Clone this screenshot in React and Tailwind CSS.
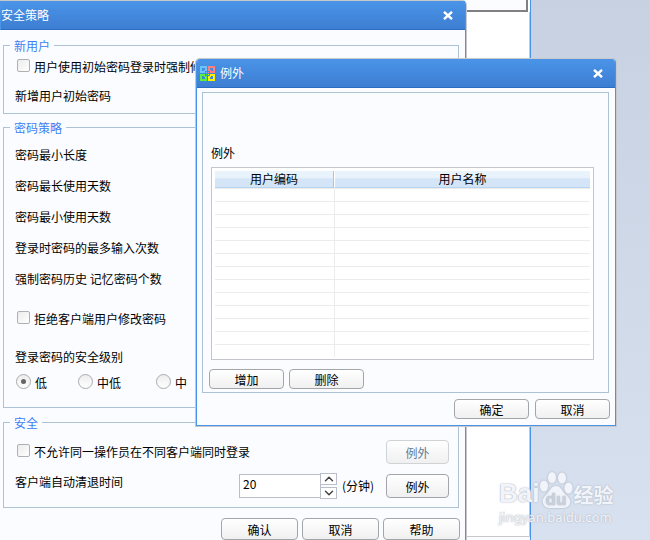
import { useState } from "react";
import { ChevronDown, ChevronUp } from "lucide-react";

const policyRows = [
  "密码最小长度",
  "密码最长使用天数",
  "密码最小使用天数",
  "登录时密码的最多输入次数",
  "强制密码历史 记忆密码个数",
];

const emptyRows = Array.from({ length: 13 }, (_, i) => i);

function TitleBar({ title, icon }) {
  return (
    <header className="flex h-[29px] items-center border-b border-[#2b6cc4] bg-linear-to-b from-[#4a94e8] to-[#3d7ed2] pr-[9px] text-white">
      {icon}
      <h2 className="grow">{title}</h2>
      <button type="button" aria-label="关闭" className="flex h-4 w-4 items-center justify-center">
        <svg width="10" height="9" viewBox="0 0 10 9" fill="none" stroke="white" strokeWidth="2.4">
          <path d="M1 0.8 9 8.2M9 0.8 1 8.2" />
        </svg>
      </button>
    </header>
  );
}

function AppIcon() {
  return (
    <svg
      className="mr-[5px] ml-[3px] shrink-0"
      width="15"
      height="15"
      viewBox="0 0 15 15"
      fill="none"
      strokeWidth="2"
      shapeRendering="crispEdges"
    >
      <path stroke="#6cc4fb" d="M5 6H1V1h5v4" />
      <path stroke="#ff7f7f" d="M10 6h4V1H9v4" />
      <path stroke="#5cf03c" d="M5 9H1v5h5v-4" />
      <path stroke="#fff200" d="M10 9h4v5H9v-4" />
      <path fill="#6cc4fb" d="M4 4h1v1H4zM6 6h1v1H6z" />
      <path fill="#ff7f7f" d="M10 4h1v1h-1zM8 6h1v1H8z" />
      <path fill="#5cf03c" d="M4 10h1v1H4zM6 8h1v1H6z" />
      <path fill="#fff200" d="M10 10h1v1h-1zM8 8h1v1H8z" />
    </svg>
  );
}

function PushButton({ children, className = "", disabled = false }) {
  return (
    <button
      type="button"
      disabled={disabled}
      className={`rounded border border-[#a3a5a8] bg-linear-to-b from-white to-[#f0f0f1] pt-0.5 leading-4 text-black disabled:border-[#d0d3d6] disabled:text-[#5f7d99] ${className}`}
    >
      {children}
    </button>
  );
}

function CheckRow({ children }) {
  return (
    <label className="ml-0.5 flex h-4 gap-1 leading-4">
      <input
        type="checkbox"
        className="h-[13px] w-[13px] shrink-0 appearance-none rounded-xs border border-[#b0b0b0] bg-linear-to-br from-[#ececec] to-white checked:bg-[#4a94e8]"
      />
      <span className="whitespace-nowrap">{children}</span>
    </label>
  );
}

function RadioOption({ children, defaultChecked }) {
  return (
    <label className="flex h-4 gap-1">
      <input
        type="radio"
        name="level"
        defaultChecked={defaultChecked}
        className="grid h-[15px] w-[15px] shrink-0 appearance-none place-items-center rounded-full border border-[#ababab] bg-linear-to-b from-[#ededed] to-white checked:after:h-[5px] checked:after:w-[5px] checked:after:rounded-full checked:after:bg-[#666]"
      />
      <span className="pt-px leading-4">{children}</span>
    </label>
  );
}

function Group({ title, children, className = "" }) {
  return (
    <fieldset className={`border border-[#aec2d6] px-[11px] ${className}`}>
      <legend className="-ml-[5px] px-1 leading-[15px] text-[#3d80f5]">{title}</legend>
      {children}
    </fieldset>
  );
}

function SettingsWindow() {
  const [minutes, setMinutes] = useState(20);

  return (
    <section className="absolute top-px left-0 w-[466px] rounded-tr-sm border-r border-[#4a94e8] bg-[#fbfcff] shadow-[0_0_0_1px_#c6c8cc]">
      <div className="rounded-tr-sm bg-[#4a94e8] pl-px">
        <TitleBar title="安全策略" />
      </div>
      <div className="flex flex-col gap-1.5 pt-2 pr-1.5 pb-4 pl-[3px]">
        <Group title="新用户" className="pb-[9px]">
          <div className="flex flex-col gap-[13px] pt-1.5">
            <CheckRow>用户使用初始密码登录时强制修</CheckRow>
            <p className="leading-4">新增用户初始密码</p>
          </div>
        </Group>

        <Group title="密码策略" className="pb-[17px]">
          <div className="flex flex-col gap-[15px] pt-3 leading-4">
            {policyRows.map((row) => (
              <p key={row}>{row}</p>
            ))}
          </div>
          <div className="pt-6">
            <CheckRow>拒绝客户端用户修改密码</CheckRow>
          </div>
          <p className="pt-[22px] leading-4">登录密码的安全级别</p>
          <div className="ml-px grid grid-cols-[62px_78px_auto] pt-[9px]">
            <RadioOption defaultChecked>低</RadioOption>
            <RadioOption>中低</RadioOption>
            <RadioOption>中</RadioOption>
          </div>
        </Group>

        <Group title="安全" className="mt-px pb-[9px]">
          <div className="flex flex-col gap-2.5 pt-2.5">
            <div className="flex items-center justify-between">
              <CheckRow>不允许同一操作员在不同客户端同时登录</CheckRow>
              <PushButton disabled className="-mr-0.5 h-6 w-[63px]">
                例外
              </PushButton>
            </div>
            <div className="-mr-0.5 flex h-6 items-center">
              <label htmlFor="minutes" className="grow self-start leading-4">
                客户端自动清退时间
              </label>
              <input
                id="minutes"
                inputMode="numeric"
                value={minutes}
                onChange={(e) => setMinutes(Number(e.target.value) || 0)}
                className="h-6 w-[82px] border border-[#b9bec8] bg-white px-[3px] pb-1.5 outline-none"
              />
              <div className="-ml-px flex w-[17px] flex-col gap-0.5">
                <button
                  type="button"
                  aria-label="增加分钟"
                  onClick={() => setMinutes(minutes + 1)}
                  className="flex h-3 items-center justify-center border border-[#b9bec8] bg-white"
                >
                  <ChevronUp className="h-3.5 w-3.5 shrink-0 text-[#444]" strokeWidth={2.5} />
                </button>
                <button
                  type="button"
                  aria-label="减少分钟"
                  onClick={() => setMinutes(Math.max(0, minutes - 1))}
                  className="flex h-3 items-center justify-center border border-[#b9bec8] bg-white"
                >
                  <ChevronDown className="h-3.5 w-3.5 shrink-0 text-[#444]" strokeWidth={2.5} />
                </button>
              </div>
              <span className="w-[49px] pl-[5px]">(分钟)</span>
              <PushButton className="h-6 w-[63px]">例外</PushButton>
            </div>
          </div>
        </Group>

        <div className="-mr-px flex justify-end gap-1 pt-1">
          <PushButton className="h-[22px] w-[77px]">确认</PushButton>
          <PushButton className="h-[22px] w-[77px]">取消</PushButton>
          <PushButton className="h-[22px] w-[77px]">帮助</PushButton>
        </div>
      </div>
    </section>
  );
}

function ExceptionDialog() {
  return (
    <section
      role="dialog"
      aria-label="例外"
      className="absolute top-[59px] left-[196px] w-[420px] overflow-hidden rounded-t-sm border-x border-b border-[#4a94e8] bg-[#fbfcff] shadow-[0_0_0_1px_#c6c8cc]"
    >
      <TitleBar title="例外" icon={<AppIcon />} />
      <div className="px-[5px] pt-1 pb-1.5">
        <div className="mr-px border border-[#aec2d6] px-1.5 pt-[52px] pb-[3px]">
          <p className="pl-0.5 leading-4">例外</p>
          <div className="mt-1.5 mr-2 ml-0.5 border border-[#c3c6cc] bg-white p-[3px] pb-0.5">
            <table className="w-full table-fixed border-separate border-spacing-0">
              <thead>
                <tr>
                  <th className="h-[17px] w-[119px] border-r border-b border-r-[#a3c6e2] border-b-[#b5d5f0] bg-linear-to-b from-[#e9f3fc] from-40% to-[#d3e5f7] to-50% p-0 leading-4 font-normal">
                    用户编码
                  </th>
                  <th className="h-[17px] border-b border-l border-b-[#b5d5f0] border-l-white bg-linear-to-b from-[#e9f3fc] from-40% to-[#d3e5f7] to-50% p-0 leading-4 font-normal">
                    用户名称
                  </th>
                </tr>
              </thead>
              <tbody>
                {emptyRows.map((i) => (
                  <tr key={i}>
                    <td className="h-[13px] border-t border-[#ececec] p-0" />
                    <td className="h-[13px] border-t border-l border-[#ececec] p-0" />
                  </tr>
                ))}
              </tbody>
            </table>
          </div>
          <div className="mt-[9px] flex gap-[5px]">
            <PushButton className="h-5 w-[75px]">增加</PushButton>
            <PushButton className="h-5 w-[75px]">删除</PushButton>
          </div>
        </div>
        <div className="flex justify-end gap-1.5 pt-1.5">
          <PushButton className="h-5 w-[75px]">确定</PushButton>
          <PushButton className="h-5 w-[75px]">取消</PushButton>
        </div>
      </div>
    </section>
  );
}

function Watermark() {
  return (
    <div className="absolute top-[469px] left-[499px] flex flex-col text-[#f1f4fa] [text-shadow:0_0_1px_#b4bac6,0_0_2px_#b4bac6]">
      <div className="flex h-10 items-end">
        <span className="font-['Liberation_Sans',sans-serif] text-[26px] leading-8 font-bold">Bai</span>
        <svg className="shrink-0 drop-shadow-[0_0_1px_#aab1be]" width="34" height="38" viewBox="0 0 34 38">
          <g fill="#f1f4fa">
            <ellipse cx="5" cy="15" rx="4" ry="5.500" />
            <ellipse cx="13" cy="6.500" rx="4" ry="5.500" />
            <ellipse cx="23" cy="7" rx="4" ry="5.500" />
            <ellipse cx="29.500" cy="17" rx="4" ry="5.500" />
            <path d="M17 15c-5 0-6 5-9 8-3 3-5 5-4 9 1 4 4 5 8 5h11c4 0 7-1 8-5 1-4-2-6-5-9-3-3-4-8-9-8z" />
          </g>
          <text x="17" y="34" textAnchor="middle" fontSize="17" fontWeight="700" fontFamily="Liberation Sans" fill="#c9d1de">
            du
          </text>
        </svg>
        <span className="text-xl leading-7 font-bold">经验</span>
      </div>
      <span className="font-['Noto_Sans',sans-serif] text-[13px] leading-4">jingyan.baidu.com</span>
    </div>
  );
}

export default function App() {
  return (
    <main className="relative h-screen overflow-hidden bg-linear-to-b from-[#c8d1e2] to-[#d8e1ef] font-['Noto_Sans_CJK_SC',sans-serif] text-xs text-black">
      <div className="absolute inset-y-0 left-0 flex w-[531px] flex-col border-r border-[#4a94e8] bg-white">
        <div className="mr-0.5 h-3 border-r-2 border-b-2 border-[#808080] bg-[#fbfcff]" />
        <div className="grow border-r border-b border-[#c6c8cc]" />
        <div className="h-[3px] bg-[#fbfcff]" />
      </div>
      <SettingsWindow />
      <ExceptionDialog />
      <Watermark />
    </main>
  );
}
